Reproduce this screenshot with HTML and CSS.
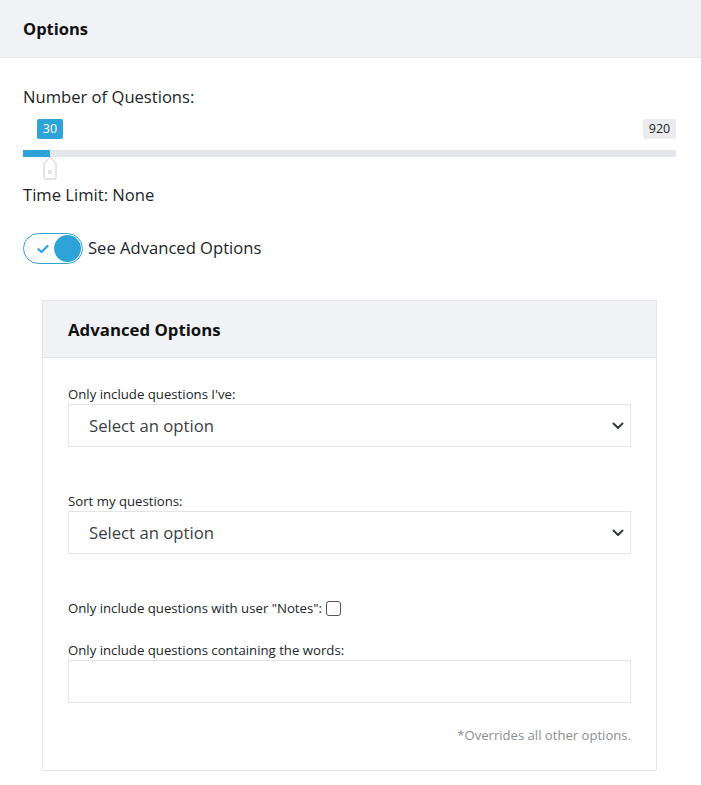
FILE: index.html
```html
<!DOCTYPE html>
<html>
<head>
<meta charset="utf-8">
<link rel="stylesheet" href="styles.css">
</head>
<body>
<div class="panel">
  <div class="panel-head">Options</div>
  <div class="panel-body">
    <div class="field-label big">Number of Questions:</div>
    <div class="slider">
      <div class="badges">
        <span class="badge cur">30</span>
        <span class="badge max">920</span>
      </div>
      <div class="track"><div class="fill" style="width:27px"></div></div>
      <div class="handle-row">
        <svg class="handle" width="14" height="24" viewBox="0 0 14 24">
          <path d="M7 1 L13 7.5 V21.5 Q13 23 11.5 23 H2.5 Q1 23 1 21.5 V7.5 Z" fill="#fff" stroke="#c5c8cc" stroke-width="1"/>
          <line x1="6" y1="14" x2="6" y2="18" stroke="#c5c8cc"/>
          <line x1="8" y1="14" x2="8" y2="18" stroke="#c5c8cc"/>
        </svg>
      </div>
    </div>
    <div class="field-label big time">Time Limit: None</div>
    <div class="toggle-row">
      <span class="toggle">
        <svg class="check" width="12" height="10" viewBox="0 0 12 10"><path d="M1.5 5.2 L4.5 8 L10.5 2" fill="none" stroke="#2ea3d7" stroke-width="2.2" stroke-linecap="round" stroke-linejoin="round"/></svg>
        <span class="knob"></span>
      </span>
      <span class="toggle-text">See Advanced Options</span>
    </div>
    <div class="card">
      <div class="card-head">Advanced Options</div>
      <div class="card-body">
        <div class="label">Only include questions I've:</div>
        <div class="select"><span>Select an option</span>
          <svg width="12" height="8" viewBox="0 0 12 8"><path d="M1.5 1.5 L6 6 L10.5 1.5" fill="none" stroke="#343a40" stroke-width="2" stroke-linecap="round" stroke-linejoin="round"/></svg>
        </div>
        <div class="label gap">Sort my questions:</div>
        <div class="select"><span>Select an option</span>
          <svg width="12" height="8" viewBox="0 0 12 8"><path d="M1.5 1.5 L6 6 L10.5 1.5" fill="none" stroke="#343a40" stroke-width="2" stroke-linecap="round" stroke-linejoin="round"/></svg>
        </div>
        <div class="label gap notes">Only include questions with user "Notes":<span class="checkbox"></span></div>
        <div class="label words">Only include questions containing the words:</div>
        <div class="input"></div>
        <div class="note">*Overrides all other options.</div>
      </div>
    </div>
  </div>
</div>
</body>
</html>
```
FILE: styles.css
```css
* { box-sizing: border-box; }
html, body { margin: 0; padding: 0; background: #fff; }
body {
  font-family: "Open Sans", "Noto Sans", sans-serif;
  color: #212529;
  width: 701px;
}
.panel-head {
  height: 58px;
  background: #f1f2f6;
  border-bottom: 1px solid #e4e6ea;
  padding: 0 23px;
  display: flex;
  align-items: center;
  font-weight: 700;
  font-size: 16.5px;
  color: #111;
}
.panel-body { padding: 28px 25px 0 23px; }
.big { font-size: 16.6px; line-height: 22px; }
.slider { margin-top: 11px; }
.badges {
  display: flex;
  justify-content: space-between;
  height: 20px;
}
.badge {
  font-size: 12.5px;
  line-height: 20px;
  border-radius: 2px;
  text-align: center;
}
.badge.cur { background: #2ea3d7; color: #fff; margin-left: 14px; width: 26px; }
.badge.max { background: #e9ebee; color: #222; width: 33px; }
.track {
  margin-top: 11px;
  height: 7px;
  background: #e3e6ea;
}
.fill { height: 100%; background: #2ea3d7; }
.handle-row { height: 22px; }
.handle { display: block; margin-left: 20px; margin-top: -1px; }
.time { margin-top: 6px; }
.toggle-row {
  display: flex;
  align-items: center;
  margin-top: 27px;
}
.toggle {
  width: 60px;
  height: 31px;
  border: 1px solid #2ea3d7;
  border-radius: 16px;
  display: flex;
  align-items: center;
  justify-content: space-between;
  padding: 0 1px 0 13px;
}
.check { display: block; }
.knob {
  width: 27px;
  height: 27px;
  border-radius: 50%;
  background: #2ea3d7;
}
.toggle-text { font-size: 16.6px; margin-left: 5px; margin-top: -2px; }
.card {
  margin: 36px 19px 0 19px;
  border: 1px solid #e4e6ea;
}
.card-head {
  height: 57px;
  background: #f1f2f6;
  border-bottom: 1px solid #e4e6ea;
  padding: 0 25px;
  display: flex;
  align-items: center;
  font-weight: 700;
  font-size: 16.8px;
  color: #111;
}
.card-body { padding: 26px 25px 25px 25px; }
.label { font-size: 13.2px; line-height: 20px; color: #212529; }
.gap { margin-top: 44px; }
.select {
  height: 43px;
  border: 1px solid #e2e4e7;
  display: flex;
  align-items: center;
  justify-content: space-between;
  padding: 0 6px 0 20px;
  font-size: 16.7px;
  color: #3a3f44;
}
.select svg { display: block; }
.notes { display: flex; align-items: center; }
.checkbox {
  display: inline-block;
  width: 15px;
  height: 15px;
  border: 1px solid #555;
  border-radius: 3px;
  margin-left: 4px;
}
.words { margin-top: 22px; }
.input {
  height: 43px;
  border: 1px solid #e2e4e7;
}
.note {
  text-align: right;
  font-size: 13.1px;
  color: #8a8d91;
  margin-top: 22px;
  line-height: 20px;
}
```
